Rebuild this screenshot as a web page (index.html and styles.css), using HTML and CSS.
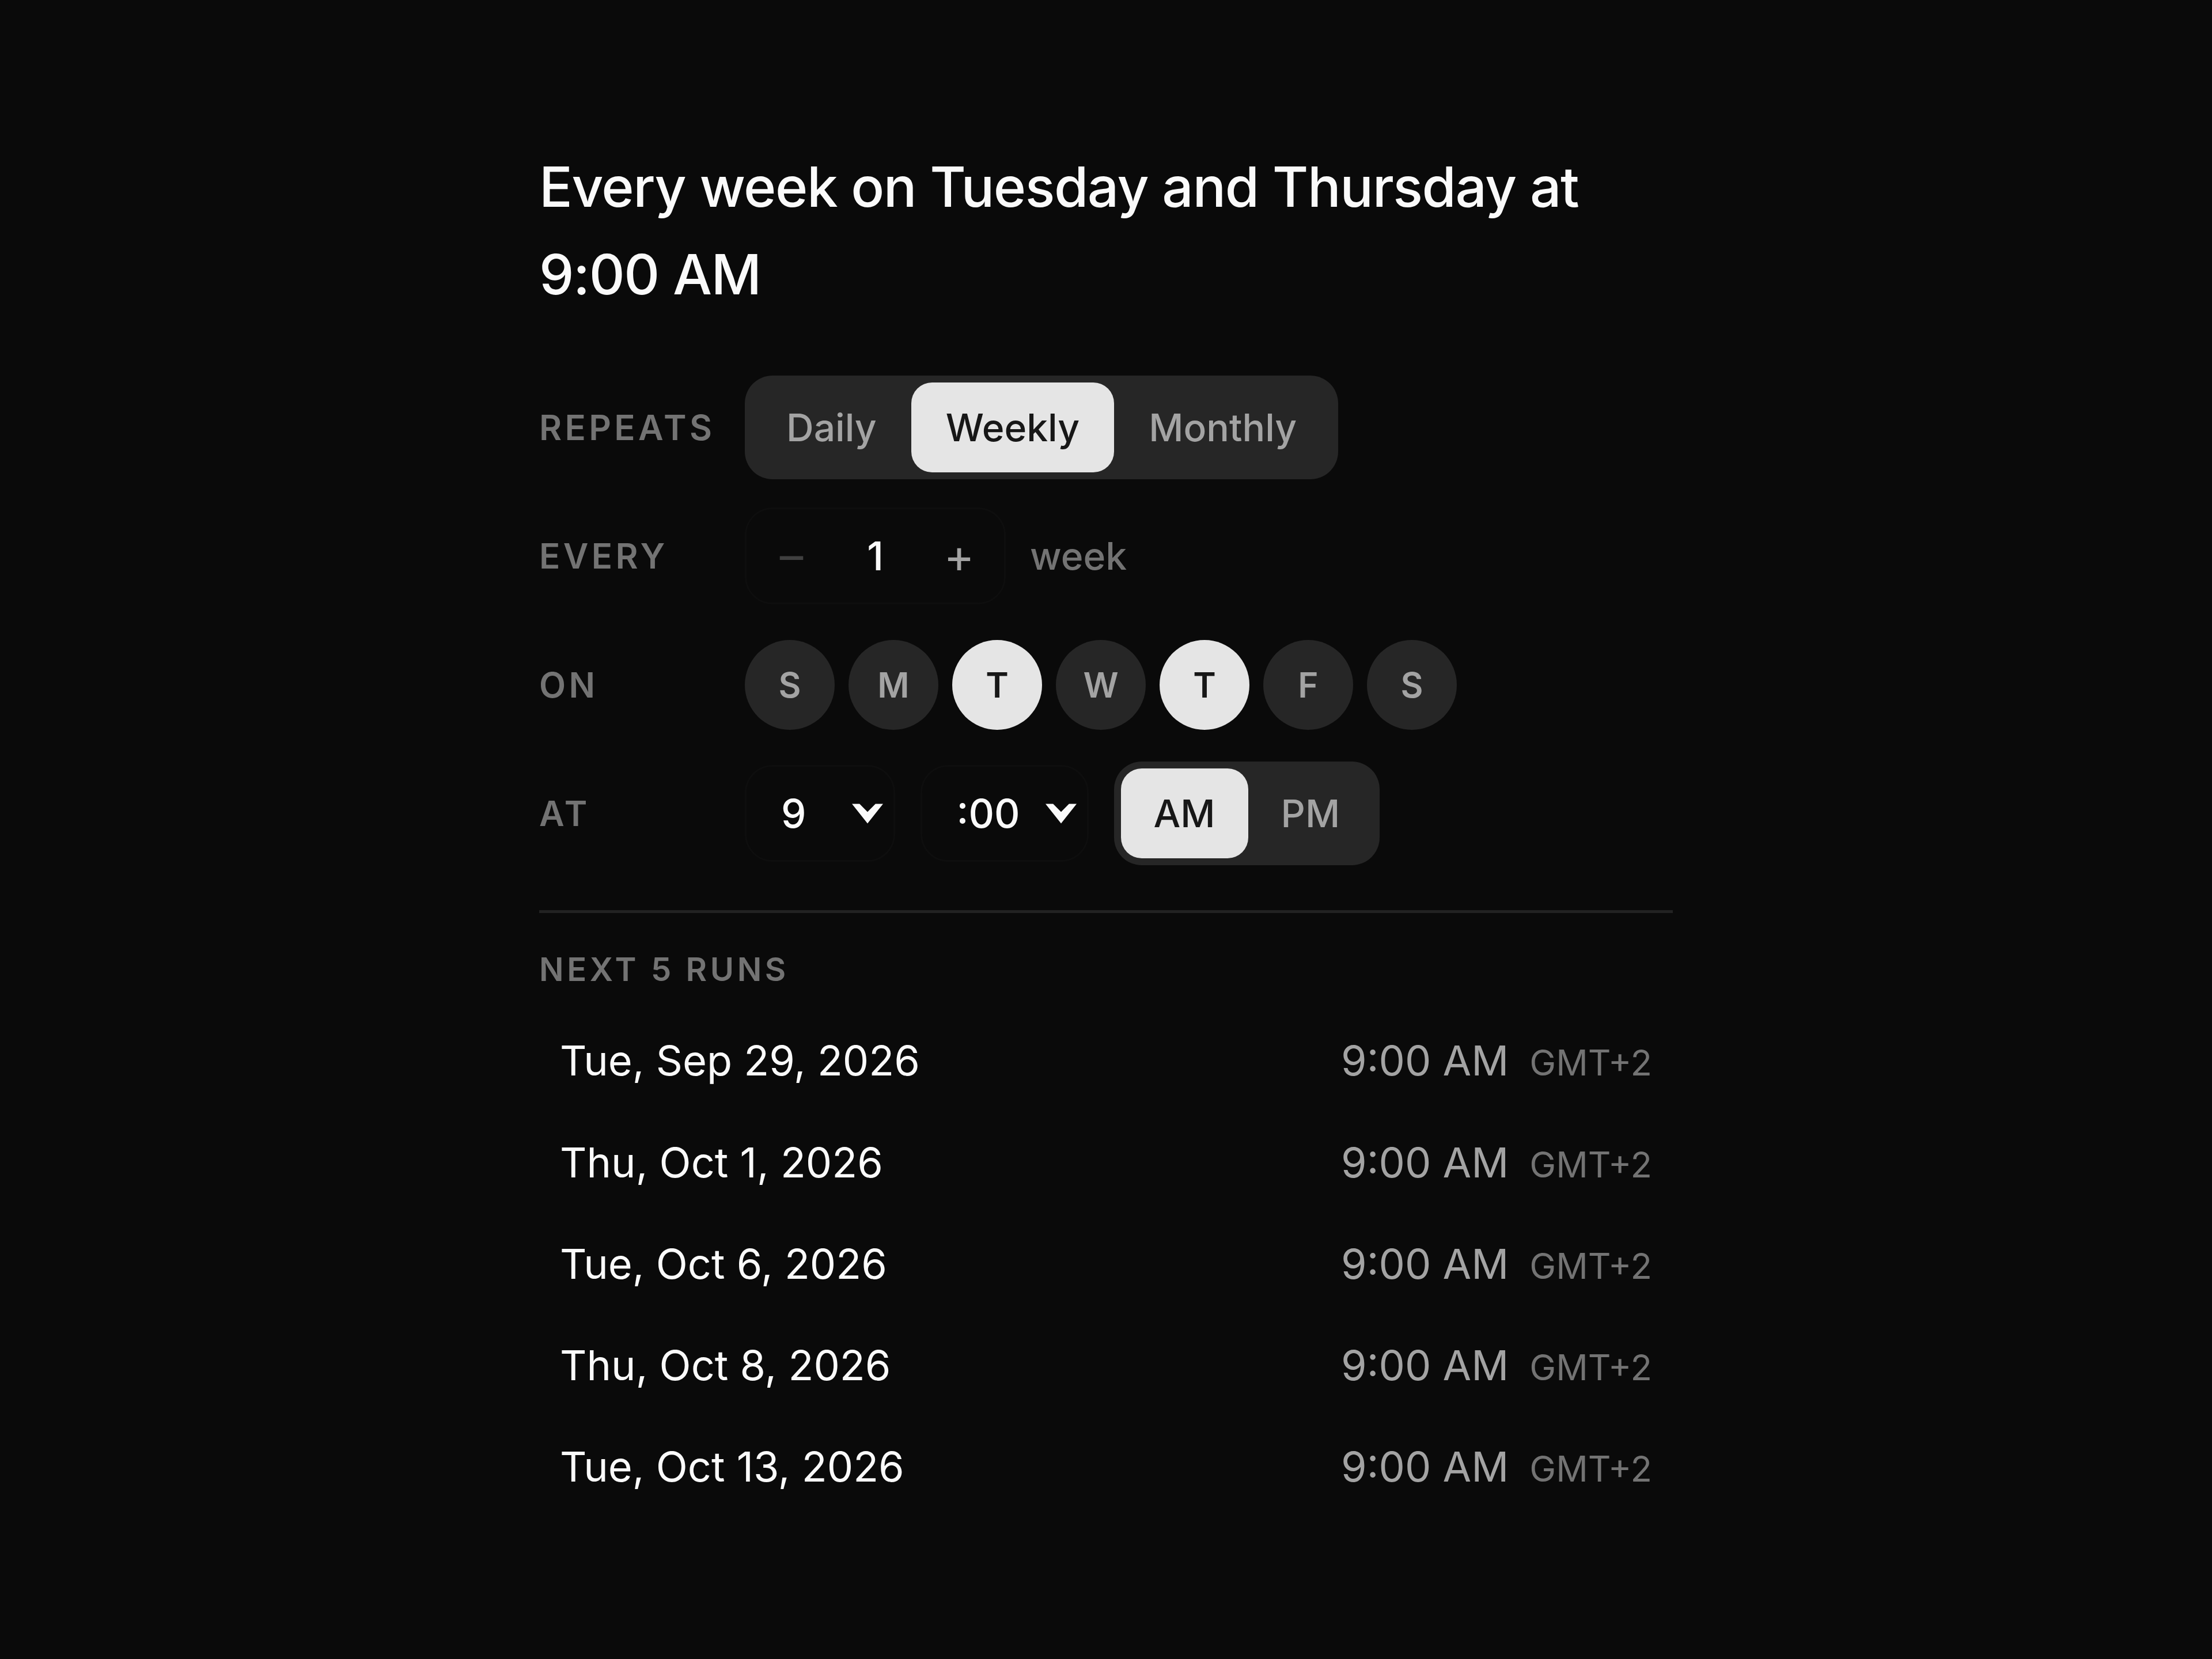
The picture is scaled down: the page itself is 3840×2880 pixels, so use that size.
FILE: index.html
```html
<!DOCTYPE html>
<html lang="en">
<head>
<meta charset="utf-8">
<title>Schedule</title>
<link rel="stylesheet" href="styles.css">
</head>
<body>
<main class="scheduler">
  <h1 class="summary">Every week on Tuesday and Thursday at 9:00 AM</h1>

  <div class="fields">
    <div class="field">
      <span class="field-label">Repeats</span>
      <div class="segmented">
        <button class="seg-btn">Daily</button>
        <button class="seg-btn is-active">Weekly</button>
        <button class="seg-btn">Monthly</button>
      </div>
    </div>

    <div class="field">
      <span class="field-label">Every</span>
      <div class="stepper">
        <button class="step-btn" disabled>&ndash;</button>
        <span class="step-value">1</span>
        <button class="step-btn">+</button>
      </div>
      <span class="unit">week</span>
    </div>

    <div class="field">
      <span class="field-label">On</span>
      <div class="days">
        <button class="day">S</button>
        <button class="day">M</button>
        <button class="day is-active">T</button>
        <button class="day">W</button>
        <button class="day is-active">T</button>
        <button class="day">F</button>
        <button class="day">S</button>
      </div>
    </div>

    <div class="field">
      <span class="field-label">At</span>
      <div class="time">
        <div class="select select-hour">
          <span>9</span>
          <svg class="chevron" viewBox="0 0 18 12" aria-hidden="true"><path d="M0 0.5H4.4L9 5.2L13.6 0.5H18L9 11.8Z"/></svg>
        </div>
        <div class="select select-minute">
          <span>:00</span>
          <svg class="chevron" viewBox="0 0 18 12" aria-hidden="true"><path d="M0 0.5H4.4L9 5.2L13.6 0.5H18L9 11.8Z"/></svg>
        </div>
        <div class="segmented">
          <button class="seg-btn seg-btn-tight is-active">AM</button>
          <button class="seg-btn seg-btn-tight">PM</button>
        </div>
      </div>
    </div>
  </div>

  <hr class="divider">

  <section class="runs">
    <h2 class="runs-title">Next 5 runs</h2>
    <ul class="run-list">
      <li class="run"><span class="run-date">Tue, Sep 29, 2026</span><span class="run-time">9:00 AM <span class="tz">GMT+2</span></span></li>
      <li class="run"><span class="run-date">Thu, Oct 1, 2026</span><span class="run-time">9:00 AM <span class="tz">GMT+2</span></span></li>
      <li class="run"><span class="run-date">Tue, Oct 6, 2026</span><span class="run-time">9:00 AM <span class="tz">GMT+2</span></span></li>
      <li class="run"><span class="run-date">Thu, Oct 8, 2026</span><span class="run-time">9:00 AM <span class="tz">GMT+2</span></span></li>
      <li class="run"><span class="run-date">Tue, Oct 13, 2026</span><span class="run-time">9:00 AM <span class="tz">GMT+2</span></span></li>
    </ul>
  </section>
</main>
</body>
</html>
```

FILE: styles.css
```css
html {
  zoom: 3;
  background: #0a0a0a;
}

body {
  margin: 0;
  font-family: Inter, "Noto Sans", "Liberation Sans", sans-serif;
  color: #fafafa;
  min-height: 960px;
}

button {
  font: inherit;
  color: inherit;
  background: none;
  border: 0;
  padding: 0;
  cursor: pointer;
}

.scheduler {
  width: 656px;
  margin: 0 auto;
  padding-top: 83px;
}

.summary {
  margin: 0;
  font-size: 32px;
  line-height: 50.6px;
  font-weight: 500;
  letter-spacing: -0.015em;
  color: #fafafa;
}

.fields {
  margin-top: 33px;
  display: flex;
  flex-direction: column;
  gap: 14.5px;
}

.field {
  display: flex;
  align-items: center;
  height: 60px;
}

.field-label {
  width: 119px;
  flex: none;
  font-size: 20px;
  font-weight: 600;
  letter-spacing: 0.09em;
  text-transform: uppercase;
  color: #737373;
}

.segmented {
  display: flex;
  padding: 4px;
  background: #262626;
  border-radius: 16px;
}

.seg-btn {
  height: 52px;
  padding: 0 20px;
  border-radius: 12px;
  font-size: 22px;
  font-weight: 500;
  color: #a3a3a3;
}

.seg-btn-tight {
  padding: 0 19px;
}

.seg-btn.is-active {
  background: #e5e5e5;
  color: #171717;
}

.stepper {
  display: grid;
  grid-template-columns: 48px 44px 48px;
  column-gap: 2.5px;
  align-items: center;
  height: 54px;
  padding: 0 2px;
  border: 1px solid #0e0e0e;
  border-radius: 16px;
}

.step-btn {
  height: 100%;
  font-size: 27px;
  font-weight: 400;
  color: #a3a3a3;
}

.step-btn:disabled {
  color: #404040;
}

.step-value {
  text-align: center;
  font-size: 23px;
  font-weight: 500;
  color: #fafafa;
}

.unit {
  margin-left: 14px;
  font-size: 22px;
  font-weight: 500;
  color: #737373;
}

.days {
  display: flex;
  gap: 8px;
}

.day {
  width: 52px;
  height: 52px;
  border-radius: 50%;
  background: #262626;
  color: #a3a3a3;
  font-size: 20px;
  font-weight: 600;
}

.day.is-active {
  background: #e5e5e5;
  color: #171717;
}

.time {
  display: flex;
  align-items: center;
  gap: 14.5px;
}

.select {
  box-sizing: border-box;
  display: flex;
  align-items: center;
  justify-content: space-between;
  height: 56px;
  padding: 0 6px 0 20px;
  border: 1px solid #0e0e0e;
  border-radius: 16px;
  font-size: 23px;
  font-weight: 500;
  color: #fafafa;
}

.select-hour {
  width: 87px;
}

.select-minute {
  width: 97.5px;
}

.chevron {
  width: 18px;
  height: 12px;
  fill: #fafafa;
}

.divider {
  margin: 26px 0 0;
  border: 0;
  height: 1.67px;
  background: #222222;
}

.runs-title {
  margin: 23.3px 0 0;
  font-size: 18.7px;
  line-height: 18.7px;
  font-weight: 600;
  letter-spacing: 0.1em;
  text-transform: uppercase;
  color: #737373;
}

.run-list {
  list-style: none;
  margin: 13.9px 0 0;
  padding: 0;
}

.run {
  display: flex;
  align-items: center;
  justify-content: space-between;
  height: 58.75px;
  padding: 0 12px;
  font-size: 24px;
}

.run-date {
  color: #fafafa;
}

.run-time {
  display: flex;
  align-items: baseline;
  gap: 12px;
  color: #a3a3a3;
}

.tz {
  font-size: 20.5px;
  color: #737373;
}
```
